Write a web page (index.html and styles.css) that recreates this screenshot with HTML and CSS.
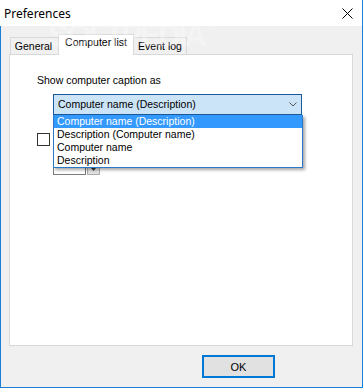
FILE: index.html
```html
<!DOCTYPE html>
<html>
<head>
<meta charset="utf-8">
<link rel="stylesheet" href="styles.css">
</head>
<body>
<div class="window">
  <div class="titlebar">
    <span class="title">Preferences</span>
    <svg class="close" width="11" height="11" viewBox="0 0 11 11"><path d="M0.5 0.5 L10.5 10.5 M10.5 0.5 L0.5 10.5" stroke="#000" stroke-width="1" fill="none"/></svg>
  </div>
  <div class="client">
    <div class="watermark">SOFTPEDIA<span class="reg">®</span></div>
    <div class="tabs">
      <div class="tab tab-general">General</div>
      <div class="tab tab-active">Computer list</div>
      <div class="tab tab-event">Event log</div>
    </div>
    <div class="panel">
      <div class="label">Show computer caption as</div>
      <div class="combo">
        <div class="combo-box">
          <span>Computer name (Description)</span>
          <svg class="chev" width="8" height="5" viewBox="0 0 8 5"><path d="M0.5 0.5 L4 4 L7.5 0.5" stroke="#555" stroke-width="1" fill="none"/></svg>
        </div>
        <ul class="list">
          <li class="sel">Computer name (Description)</li>
          <li>Description (Computer name)</li>
          <li>Computer name</li>
          <li>Description</li>
        </ul>
      </div>
      <div class="check-row"><span class="checkbox"></span></div>
      <div class="spin-row">
        <span class="textbox"></span>
        <span class="spin">
          <span class="spin-half"><svg width="5" height="3" viewBox="0 0 5 3"><path d="M0 3 L2.5 0 L5 3Z" fill="#333"/></svg></span>
          <span class="spin-half"><svg width="5" height="3" viewBox="0 0 5 3"><path d="M0 0 L2.5 3 L5 0Z" fill="#333"/></svg></span>
        </span>
      </div>
    </div>
    <div class="buttons">
      <button class="ok">OK</button>
    </div>
  </div>
</div>
</body>
</html>
```
FILE: styles.css
```css
* { box-sizing: border-box; }
html, body { margin: 0; padding: 0; background: #fff; }
body { font-family: "Liberation Sans", Arial, sans-serif; font-size: 10.5px; color: #000; }

.window {
  width: 363px;
  height: 388px;
  border-right: 1px solid #1a7fd6;
  border-bottom: 1px solid #1a7fd6;
  display: flex;
  flex-direction: column;
  position: relative;
  overflow: hidden;
}

.titlebar {
  height: 26px;
  background: #fff;
  display: flex;
  align-items: center;
  justify-content: space-between;
  padding: 0 9px 0 4px;
  flex: none;
}
.title {
  font-family: "Noto Sans", "Open Sans", sans-serif;
  font-size: 12px;
  color: #000;
}
.close { display: block; }

.client {
  flex: 1;
  background: #f0f0f0;
  border-left: 1px solid #1a7fd6;
  padding: 8px 9px 9px 8px;
  display: flex;
  flex-direction: column;
  position: relative;
}

.watermark {
  position: absolute;
  left: 47px;
  top: -8px;
  font-family: "Liberation Sans", Arial, sans-serif;
  font-weight: bold;
  font-size: 32px;
  letter-spacing: -3px;
  color: rgba(255,255,255,0.3);
  pointer-events: none;
  z-index: 5;
  line-height: 34px;
  white-space: nowrap;
}
.watermark .reg { font-size: 11px; vertical-align: top; margin-left: 5px; line-height: 16px; letter-spacing: 0; }

.tabs {
  display: flex;
  align-items: flex-end;
  height: 20px;
  padding-left: 1px;
  flex: none;
}
.tab {
  height: 17px;
  border: 1px solid #d9d9d9;
  border-bottom: none;
  background: #f0f0f0;
  line-height: 13px;
  padding-top: 2px;
  text-align: center;
  white-space: nowrap;
}
.tab-general { width: 49px; padding-right: 2px; }
.tab-active {
  width: 76px;
  height: 21px;
  margin-left: -1px;
  margin-bottom: -1px;
  padding-top: 1px;
  background: #fff;
  position: relative;
  z-index: 1;
}
.tab-event { width: 54px; margin-left: -1px; }

.panel {
  height: 292px;
  flex: none;
  border: 1px solid #d9d9d9;
  background: #fff;
  padding: 19px 0 0 27px;
}
.label { line-height: 13px; }

.combo {
  position: relative;
  margin: 7px 0 0 16px;
  width: 249px;
}
.combo-box {
  height: 21px;
  border: 1px solid #1c5b9b;
  background: #cce4f7;
  display: flex;
  align-items: center;
  justify-content: space-between;
  padding: 0 4px 0 4px;
  line-height: 13px;
}
.chev { display: block; }

.list {
  position: absolute;
  top: 21px;
  left: 0;
  width: 250px;
  margin: 0;
  padding: 0;
  list-style: none;
  background: #fff;
  border: 1px solid #2b78c8;
  border-top: none;
  box-shadow: 2px 2px 3px rgba(0,0,0,0.35);
  z-index: 2;
}
.list li {
  height: 13px;
  line-height: 13px;
  padding-left: 3px;
  white-space: nowrap;
}
.list li.sel { background: #3399ff; color: #fff; }

.check-row { margin-top: 18px; height: 13px; display: flex; }
.checkbox {
  width: 13px;
  height: 13px;
  border: 1px solid #333;
  background: #fff;
}

.spin-row {
  margin: 8px 0 0 16px;
  display: flex;
}
.textbox {
  width: 33px;
  height: 21px;
  border: 1px solid #7a7a7a;
  background: #fff;
}
.spin {
  width: 13px;
  height: 21px;
  margin-left: 1px;
  display: flex;
  flex-direction: column;
}
.spin-half {
  flex: 1;
  background: #e1e1e1;
  border: 1px solid #adadad;
  display: flex;
  align-items: center;
  justify-content: center;
}
.spin-half + .spin-half { border-top: none; }
.spin-half svg { display: block; }

.buttons {
  margin-top: 9px;
  display: flex;
  justify-content: flex-end;
  padding-right: 78px;
}
.ok {
  width: 73px;
  height: 23px;
  border: 2px solid #0078d7;
  background: #e1e1e1;
  font-family: "Liberation Sans", Arial, sans-serif;
  font-size: 11px;
  color: #000;
  padding: 0;
  margin: 0;
}
```
